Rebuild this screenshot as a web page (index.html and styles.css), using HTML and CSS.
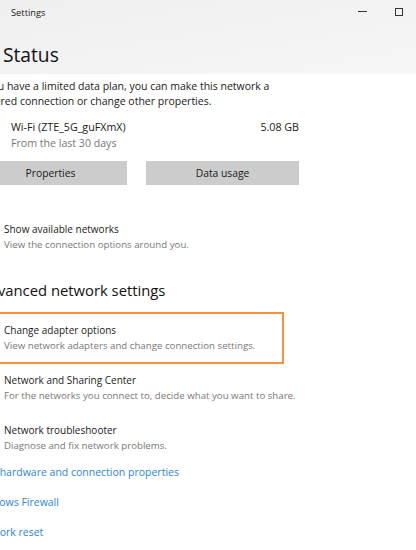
FILE: index.html
```html
<!DOCTYPE html>
<html lang="en">
<head>
<meta charset="utf-8">
<title>Settings</title>
<link rel="stylesheet" href="styles.css">
</head>
<body>
<div class="window">
  <div class="top">
    <div class="titlebar">
      <span class="app-title">Settings</span>
      <div class="controls">
        <span class="ctl ctl-min"><span class="min-line"></span></span>
        <span class="ctl ctl-max"><span class="max-box"></span></span>
      </div>
    </div>
    <h1 class="page-title">Status</h1>
  </div>

  <div class="content">
    <p class="intro">If you have a limited data plan, you can make this network a<br>metered connection or change other properties.</p>

    <div class="usage">
      <div class="usage-text">
        <div class="usage-name">Wi-Fi (ZTE_5G_guFXmX)</div>
        <div class="usage-sub">From the last 30 days</div>
      </div>
      <div class="usage-amount">5.08 GB</div>
    </div>

    <div class="buttons">
      <button class="btn">Properties</button>
      <button class="btn">Data usage</button>
    </div>

    <div class="item item-first">
      <div class="item-title">Show available networks</div>
      <div class="item-sub">View the connection options around you.</div>
    </div>

    <h2 class="section-title">Advanced network settings</h2>

    <div class="items">
      <div class="item item-focus">
        <div class="item-title">Change adapter options</div>
        <div class="item-sub">View network adapters and change connection settings.</div>
      </div>
      <div class="item">
        <div class="item-title">Network and Sharing Center</div>
        <div class="item-sub">For the networks you connect to, decide what you want to share.</div>
      </div>
      <div class="item">
        <div class="item-title">Network troubleshooter</div>
        <div class="item-sub">Diagnose and fix network problems.</div>
      </div>
    </div>

    <div class="links">
      <a class="link">View hardware and connection properties</a>
      <a class="link">Windows Firewall</a>
      <a class="link">Network reset</a>
    </div>
  </div>
</div>
</body>
</html>
```

FILE: styles.css
```css
html, body {
  margin: 0;
  padding: 0;
  background: #ffffff;
  overflow: hidden;
}

body {
  font-family: "Open Sans", "Noto Sans", sans-serif;
  color: #1a1a1a;
  width: 416px;
  height: 550px;
}

.window {
  width: 416px;
  height: 550px;
  overflow: hidden;
}

.top {
  height: 74px;
  background: linear-gradient(to bottom right, #efefef, #f6f6f6);
}

.titlebar {
  height: 24px;
  display: flex;
  align-items: center;
  justify-content: space-between;
}

.app-title {
  font-size: 9.3px;
  color: #1a1a1a;
  margin-left: 11px;
}

.controls {
  display: flex;
  align-items: center;
  height: 24px;
}

.ctl {
  display: flex;
  align-items: center;
  justify-content: center;
  height: 24px;
}

.ctl-min {
  width: 9px;
  margin-right: 28px;
}

.min-line {
  display: block;
  width: 9px;
  height: 1px;
  background: #333333;
  margin-top: -1px;
}

.ctl-max {
  width: 8px;
  margin-right: 13px;
}

.max-box {
  display: block;
  width: 6px;
  height: 6px;
  border: 1px solid #333333;
  margin-top: -1px;
}

.page-title {
  margin: 16px 0 0 3px;
  font-size: 19.2px;
  line-height: 30px;
  font-weight: 400;
  color: #111111;
}

.content {
  margin-left: -26px;
  padding-top: 5px;
}

.intro {
  margin: 0 0 0 1.3px;
  text-indent: 1.7px;
  font-size: 10.5px;
  line-height: 15px;
  color: #1a1a1a;
}

.usage {
  margin-top: 10px;
  width: 325px;
  display: flex;
  justify-content: space-between;
  align-items: flex-start;
}

.usage-text {
  padding-left: 37px;
}

.usage-name, .usage-amount {
  font-size: 10.7px;
  line-height: 16px;
  color: #1a1a1a;
}

.usage-sub {
  font-size: 10.6px;
  line-height: 16px;
  color: #767676;
}

.buttons {
  margin-top: 10px;
  display: flex;
  gap: 19px;
}

.btn {
  width: 153px;
  height: 24px;
  border: 0;
  padding: 0;
  margin: 0;
  background: #cccccc;
  font-family: inherit;
  font-size: 10.3px;
  color: #1a1a1a;
}

.item {
  padding: 10px 0 10px 30px;
  width: 279px;
  box-sizing: border-box;
}

.item-first {
  margin-top: 27px;
  padding-top: 10px;
  padding-bottom: 0;
}

.item-title {
  font-size: 10px;
  line-height: 15px;
  color: #1a1a1a;
}

.item-sub {
  font-size: 9.7px;
  line-height: 15px;
  color: #777777;
  white-space: nowrap;
}

.section-title {
  margin: 26px 0 0 5.5px;
  font-size: 14.8px;
  line-height: 24px;
  font-weight: 400;
  color: #111111;
}

.items {
  margin-top: 11px;
}

.item-focus {
  width: 309px;
  outline: 2px solid #f7913d;
  outline-offset: -1px;
}

.links {
  display: flex;
  flex-direction: column;
  align-items: flex-start;
}

.link {
  font-size: 10.5px;
  line-height: 18px;
  margin-bottom: 12px;
  color: #2b85d6;
  cursor: pointer;
}
```
